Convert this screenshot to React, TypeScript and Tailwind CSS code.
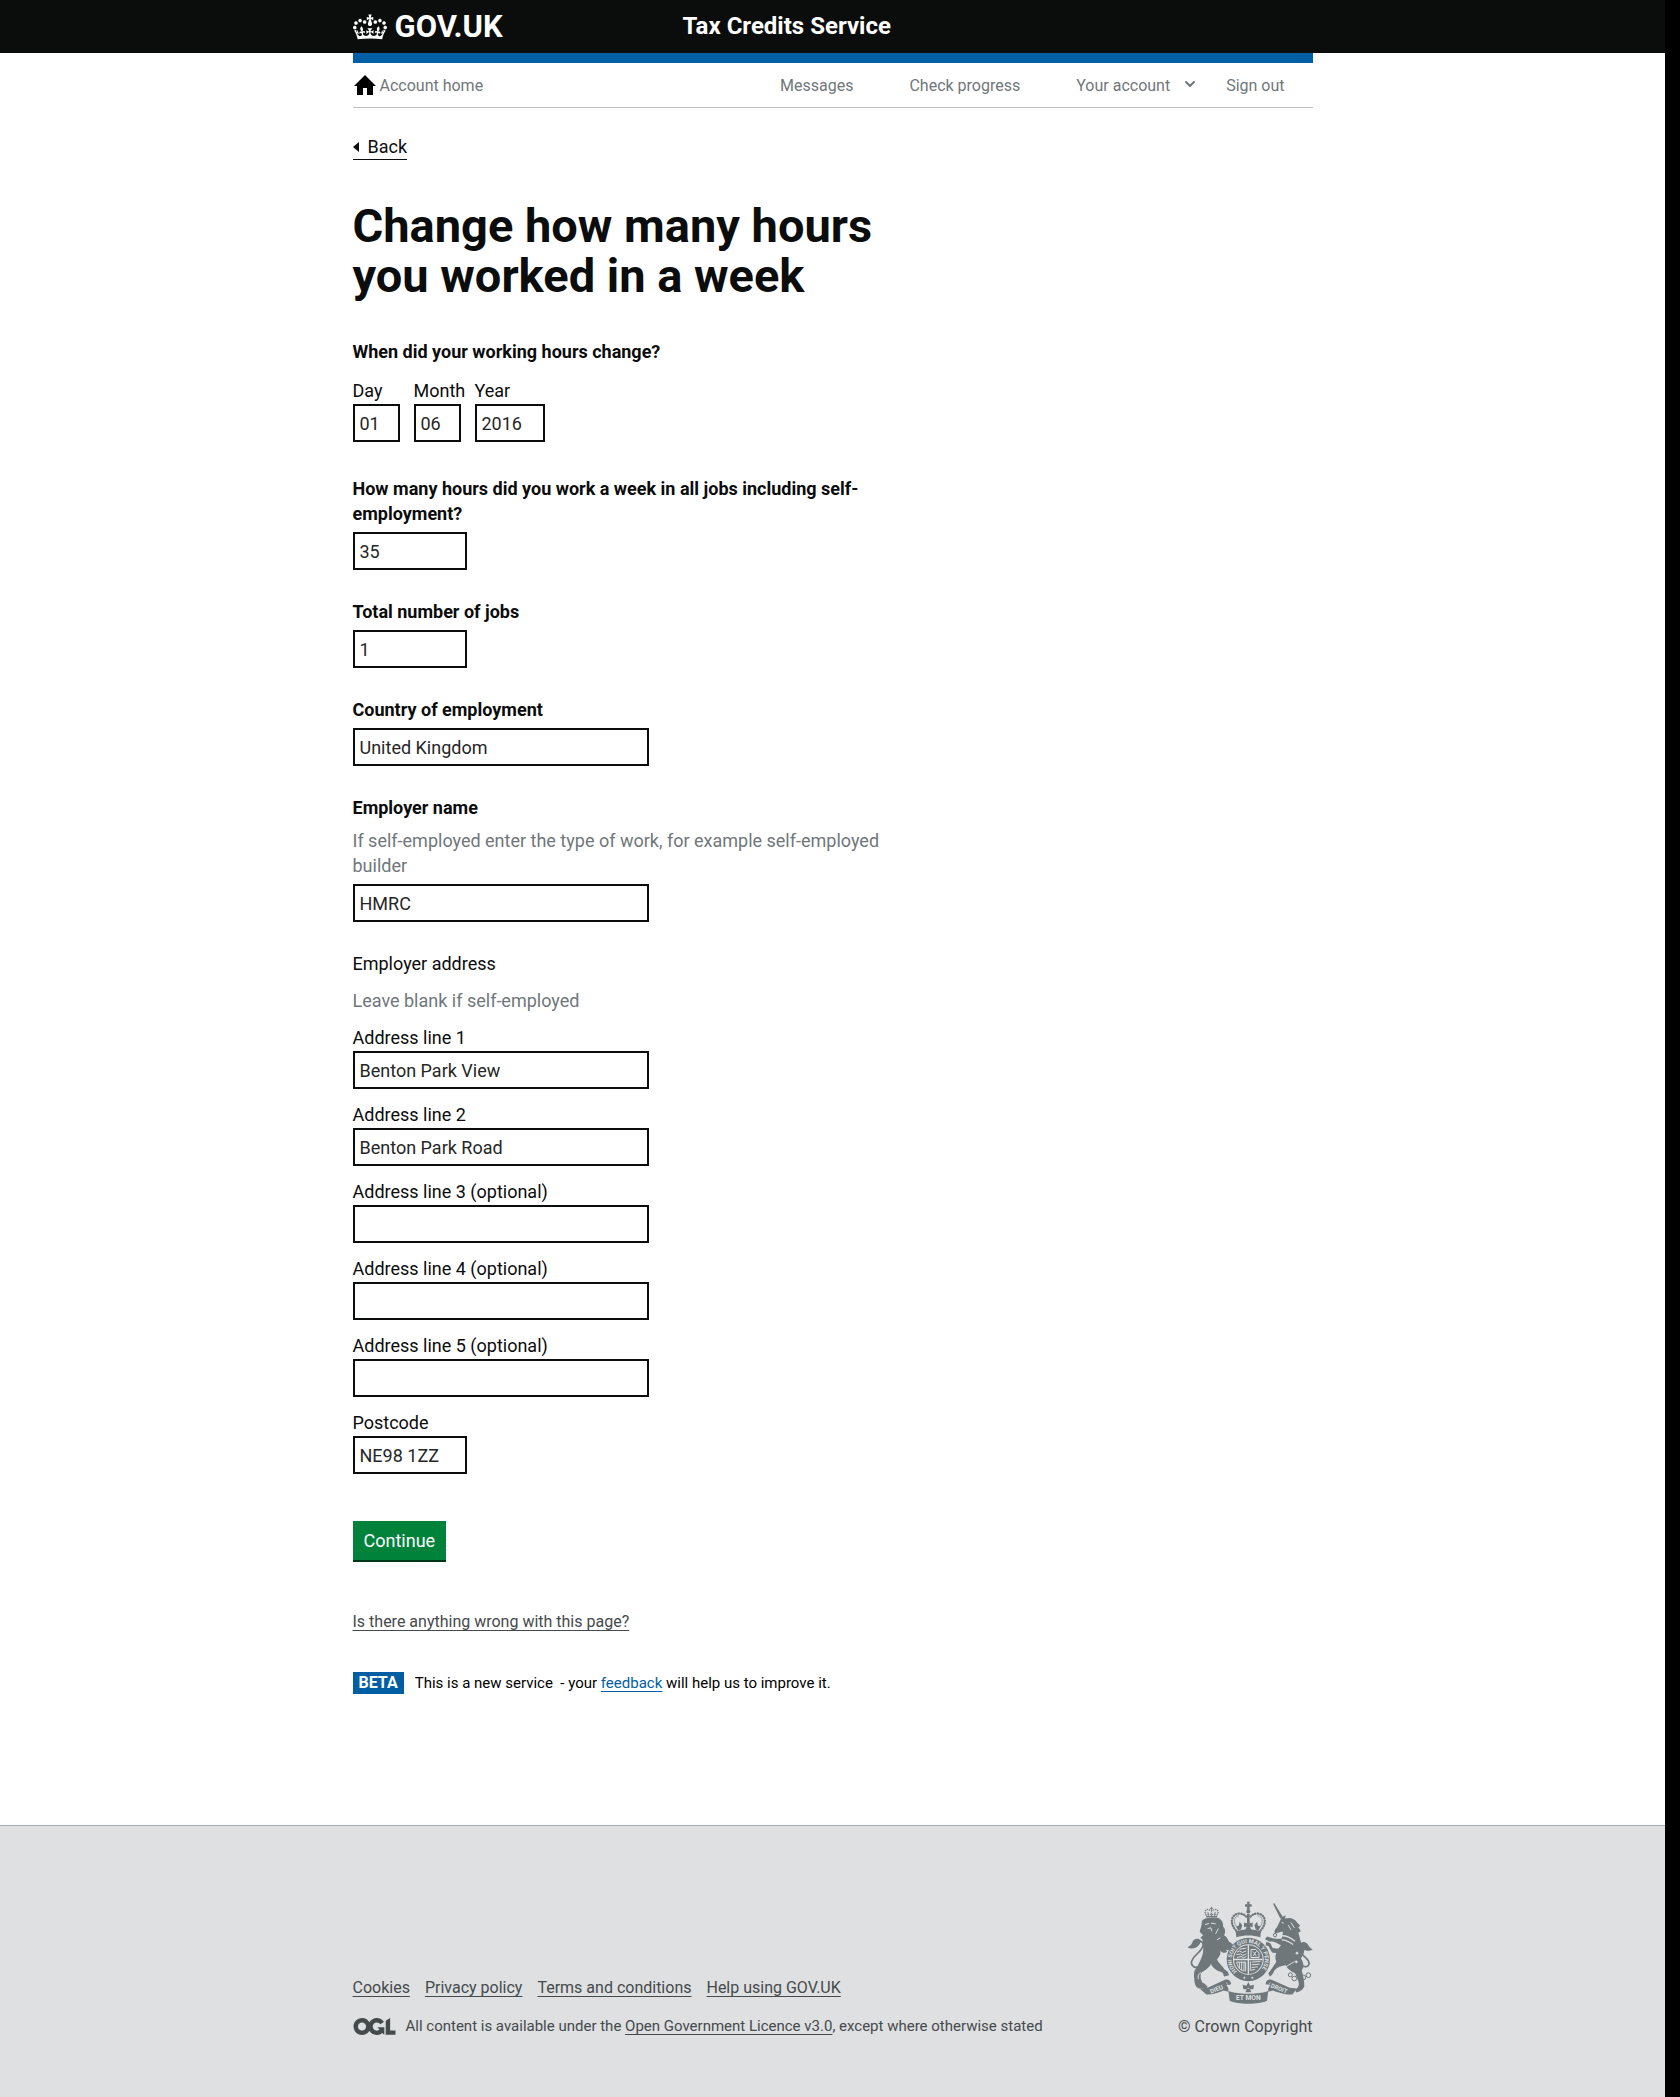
import type { ReactNode } from "react";
import { ChevronDown } from "lucide-react";

const CROWN =
  "M25 30.2c3.5 1.5 7.7-.2 9.1-3.7 1.5-3.6-.2-7.8-3.9-9.2-3.6-1.4-7.6.3-9.1 3.9-1.4 3.5.3 7.5 3.9 9zM9 39.5c3.6 1.5 7.8-.2 9.2-3.7 1.5-3.6-.2-7.8-3.9-9.1-3.6-1.5-7.6.2-9.1 3.8-1.4 3.5.3 7.5 3.8 9zM4.4 57.2c3.5 1.5 7.7-.2 9.1-3.8 1.5-3.6-.2-7.7-3.9-9.1-3.5-1.5-7.6.3-9.1 3.8-1.4 3.5.3 7.6 3.9 9.1zm38.3-21.4c3.5 1.5 7.7-.2 9.1-3.8 1.5-3.6-.2-7.7-3.9-9.1-3.6-1.5-7.6.3-9.1 3.8-1.3 3.6.4 7.7 3.9 9.1zm64.4-5.6c-3.6 1.5-7.8-.2-9.1-3.7-1.5-3.6.2-7.8 3.8-9.2 3.6-1.4 7.7.3 9.2 3.9 1.3 3.5-.4 7.5-3.9 9zm15.9 9.3c-3.6 1.5-7.7-.2-9.1-3.7-1.5-3.6.2-7.8 3.7-9.1 3.6-1.5 7.7.2 9.2 3.8 1.5 3.5-.3 7.5-3.8 9zm4.7 17.7c-3.6 1.5-7.8-.2-9.2-3.8-1.5-3.6.2-7.7 3.9-9.1 3.6-1.5 7.7.3 9.2 3.8 1.3 3.5-.4 7.6-3.9 9.1zM89.3 35.8c-3.6 1.5-7.8-.2-9.2-3.8-1.4-3.6.2-7.7 3.9-9.1 3.6-1.5 7.7.3 9.2 3.8 1.4 3.6-.3 7.7-3.9 9.1zM69.7 17.7l8.9 4.7V9.3l-8.9 2.8c-.2-.3-.5-.6-.9-.9L72.4 0H59.6l3.5 11.2c-.3.3-.6.5-.9.9l-8.8-2.8v13.1l8.8-4.7c.3.3.6.7.9.9l-5 15.4v.1c-.2.8-.4 1.6-.4 2.4 0 4.1 3.1 7.5 7 8.1h.2c.3 0 .7.1 1 .1.4 0 .7 0 1-.1h.2c4-.6 7.1-4.1 7.1-8.1 0-.8-.1-1.7-.4-2.4V34l-5.1-15.4c.4-.2.7-.6 1-.9zM66 92.8c16.9 0 32.8 1.1 47.1 3.2 4-16.9 8.9-26.7 14-33.5l-9.6-3.4c1 4.9 1.1 7.2 0 10.2-1.5-1.4-3-4.3-4.2-8.7L108.6 76c2.8-2 5-3.2 7.5-3.3-4.4 9.4-10 11.9-13.6 11.2-4.3-.8-6.3-4.6-5.6-7.9 1-4.7 5.7-5.9 8-.5 4.3-8.7-3-11.4-7.6-8.8 7.1-7.2 7.9-13.5 2.1-21.1-8 6.1-8.1 12.3-4.5 20.8-4.7-5.4-12.1-2.5-9.5 6.2 3.4-5.2 7.9-2 7.2 3.1-.6 4.3-6.4 7.8-13.5 7.2-10.3-.9-10.9-8-11.2-13.8 2.5-.5 7.1 1.8 11 7.3L80.2 60c-4.1 4.4-8 5.3-12.3 5.4 1.4-4.4 8-11.6 8-11.6H55.5s6.4 7.2 7.9 11.6c-4.2-.1-8-1-12.3-5.4l1.4 16.4c3.9-5.5 8.5-7.7 10.9-7.3-.3 5.8-.9 12.8-11.1 13.8-7.2.6-12.9-2.9-13.5-7.2-.7-5 3.8-8.3 7.1-3.1 2.7-8.7-4.6-11.6-9.4-6.2 3.7-8.5 3.6-14.7-4.6-20.8-5.8 7.6-5 13.9 2.2 21.1-4.7-2.6-11.9.1-7.7 8.8 2.3-5.5 7.1-4.2 8.1.5.7 3.3-1.3 7.1-5.7 7.9-3.5.7-9-1.8-13.5-11.2 2.5.1 4.7 1.3 7.5 3.3l-4.7-15.4c-1.2 4.4-2.7 7.2-4.3 8.7-1.1-3-.9-5.3 0-10.2l-9.5 3.4c5 6.9 9.9 16.7 14 33.5 14.8-2.1 30.8-3.2 47.7-3.2z";

const OGL =
  "M421.5 142.8V.1l-50.7 32.3v161.1h112.4v-50.7zm-122.3-9.6A47.12 47.12 0 0 1 221 97.8c0-26 21.1-47.1 47.1-47.1 16.7 0 31.4 8.7 39.7 21.8l42.7-27.2A97.63 97.63 0 0 0 268.1 0c-36.5 0-68.3 20.1-85.1 49.7A98 98 0 0 0 97.8 0C43.9 0 0 43.9 0 97.8s43.9 97.8 97.8 97.8c36.5 0 68.3-20.1 85.1-49.7a97.76 97.76 0 0 0 149.6 25.4l19.4 22.2h3v-87.8h-80l24.3 27.5zM97.8 145c-26 0-47.1-21.1-47.1-47.1s21.1-47.1 47.1-47.1 47.1 21.1 47.1 47.1S123.8 145 97.8 145";

function Container({ children, className = "" }: { children: ReactNode; className?: string }) {
  return <div className={`mx-auto w-full max-w-[960px] ${className}`}>{children}</div>;
}

function Crest() {
  const ink = "#6f777b";
  const paper = "#dee0e2";
  const lettering = { fontFamily: "Roboto, sans-serif", fontWeight: 700 };
  return (
    <svg className="h-[103px] w-[126px]" viewBox="22 18 378 308" role="img" aria-label="Royal coat of arms">
      {/* lion's crown */}
      <g transform="translate(74 35) scale(.33)" fill={ink}>
        <path d={CROWN} />
      </g>
      {/* lion */}
      <path
        fill={ink}
        d="M72 72C82 66 102 64 114 68C126 72 132 84 130 94C138 102 138 112 133 120C144 126 148 138 150 148C144 154 138 162 142 170C136 176 126 172 122 166C124 178 118 186 112 192C116 204 128 210 134 222C142 226 148 232 148 240L134 244C130 240 132 236 128 232C112 228 98 218 94 206C88 220 74 226 64 234C60 246 66 256 68 262C76 266 84 272 84 278L58 280C46 276 44 262 44 250C42 236 42 226 52 216C60 200 68 186 70 172C72 156 70 142 68 132L62 128L70 120L60 110C62 100 66 92 66 84C66 78 68 74 72 72Z"
      />
      <path fill={ink} d="M132 138C144 136 156 142 162 152L158 168C148 164 140 166 134 160Z" />
      <path stroke={paper} strokeWidth="3" fill="none" d="M76 88L88 85M94 84L108 86M84 100L94 98L96 108M116 100L108 116M122 128L112 134M64 232C56 236 54 244 56 252" />
      {/* lion's tail */}
      <path fill="none" stroke={ink} strokeWidth="5" d="M60 212C44 224 30 208 38 194C46 176 74 164 70 146C68 138 60 136 52 142" />
      <path fill={ink} d="M64 136C54 126 40 132 38 142C36 150 28 154 24 156C34 164 48 160 56 152C60 148 62 142 64 136Z" />
      {/* royal crown */}
      <g fill={ink}>
        <path d="M202 20H210L209 27H216V35H209L211 44H201L203 35H196V27H203Z" />
        <circle cx="206" cy="49" r="6" />
        <path d="M168 108C190 101 222 101 244 108L242 126C220 119 192 119 170 126Z" />
        <path d="M202 56H210V82H202Z" />
        <path d="M206 76L211 84L219 82V96L211 94L215 105H197L201 94L193 96V82L201 84Z" />
        <path d="M180 80L188 90L184 103L175 106L170 93L177 92ZM232 80L224 90L228 103L237 106L242 93L235 92Z" />
      </g>
      <path fill="none" stroke={ink} strokeWidth="7" strokeLinecap="round" strokeDasharray="1 7" d="M169 106C146 80 158 55 180 55C192 56 199 62 203 70M243 106C266 80 254 55 232 55C220 56 213 62 209 70" />
      <path fill="none" stroke={ink} strokeWidth="2" d="M174 100C158 80 163 63 178 62M238 100C254 80 249 63 234 62" />
      {/* garter and shield */}
      <circle cx="206" cy="193" r="65" fill={ink} />
      <circle cx="206" cy="193" r="46" fill={paper} />
      <circle cx="206" cy="193" r="43" fill={ink} />
      <g transform="translate(0 7)">
        <path stroke={paper} strokeWidth="4" d="M206 143V229M163 186H249" />
        <g stroke={paper} strokeWidth="3" fill="none">
          <path d="M172 164L180 160L188 165L200 160M170 172L182 169L190 174L200 169M172 180L184 177L192 181L200 177M180 155L200 152" />
          <path d="M212 192V220M216 194L242 192M216 202L240 200M216 210L234 208M214 218L226 216" />
          <path d="M214 156H228L238 166V180H214ZM220 162L230 176M230 162L220 176" />
          <path d="M171 194C175 214 186 222 198 220V194ZM179 194V212M186 194V218M193 194V218" />
        </g>
      </g>
      <path id="crest-garter" fill="none" d="M172 229A49.500 49.500 0 1 1 240 229" />
      <text fill={paper} fontSize="17" {...lettering}>
        <textPath href="#crest-garter">HONI SOIT QUI MAL Y PENSE</textPath>
      </text>
      <circle cx="194" cy="248" r="3" fill={paper} />
      <circle cx="218" cy="248" r="3" fill={paper} />
      {/* unicorn */}
      <path fill={ink} d="M280 26L284 24L310 66L302 70Z" />
      <path
        fill={ink}
        d="M306 66L318 60L316 70C330 66 346 70 352 82L362 92L356 96L364 108L356 112L360 126C362 140 368 150 374 158C376 172 368 182 364 190C372 202 374 216 366 226C372 244 374 262 374 274C370 284 360 290 350 292L346 284C356 278 360 270 356 258L346 234C334 228 322 220 318 210C302 212 292 216 284 226C280 236 276 242 270 244L266 234C276 222 284 208 290 200C286 190 286 180 290 174C278 172 270 164 268 154L258 150L260 140L272 144L280 160L296 160L304 150C292 144 280 136 270 140L256 132L262 124L282 130C290 130 298 132 306 130L310 110C300 108 294 116 286 114C282 108 286 102 292 96Z"
      />
      <path stroke={paper} strokeWidth="4" fill="none" d="M302 122C320 120 334 128 346 138M306 134C320 134 330 140 340 148" />
      <path stroke={paper} strokeWidth="3" fill="none" d="M306 82L312 84M334 82L344 98M326 90L334 104M318 216C330 206 340 204 348 196" />
      {/* unicorn's tail */}
      <path fill="none" stroke={ink} strokeWidth="5" d="M364 210C384 222 394 208 384 194C372 180 350 168 354 152C356 144 366 144 374 150" />
      <path fill={ink} d="M362 146C370 136 382 142 386 150C390 156 394 160 399 162C390 170 376 168 370 160C366 156 364 152 362 146Z" />
      {/* chain */}
      <g fill="none" stroke={ink} strokeWidth="3">
        <circle cx="286" cy="120" r="5" />
        <circle cx="282" cy="166" r="6" />
        <circle cx="332" cy="239" r="6" />
        <circle cx="344" cy="250" r="7" />
        <circle cx="371" cy="247" r="7" />
        <circle cx="386" cy="240" r="7" />
      </g>
      <circle cx="352" cy="174" r="5" fill={paper} stroke={ink} strokeWidth="2" />
      <circle cx="350" cy="200" r="5" fill={paper} stroke={ink} strokeWidth="2" />
      {/* ribbon */}
      <g fill={ink}>
        <path d="M60 280L84 278L136 254C144 250 154 256 154 266C152 270 146 270 140 270C146 276 148 284 146 290L132 286C116 292 96 300 80 298Z" />
        <path d="M352 280L330 278L276 254C268 250 258 256 258 266C260 270 266 270 272 270C266 276 264 284 266 290L280 286C296 292 320 300 338 298Z" />
        <path d="M146 286C166 298 246 298 266 286L262 317C240 329 172 329 150 317Z" />
        <path d="M206 261L212 272L223 269L221 282L211 282L215 291H197L201 282L191 282L189 269L200 272Z" />
      </g>
      <path fill="none" stroke={paper} strokeWidth="2" d="M146 286C166 297 246 297 266 286M140 262L148 274M272 262L264 274M203 280H209" />
      <text x="94" y="296" fontSize="19" fill={paper} transform="rotate(-22 94 296)" {...lettering}>
        DIEU
      </text>
      <text x="272" y="276" fontSize="18" fill={paper} transform="rotate(22 272 276)" {...lettering}>
        DROIT
      </text>
      <text x="206" y="316" fontSize="20" fill={paper} textAnchor="middle" {...lettering}>
        ET MON
      </text>
    </svg>
  );
}

function Field({
  id,
  label,
  value = "",
  width,
  bold = false,
  hint,
}: {
  id: string;
  label: string;
  value?: string;
  width: string;
  bold?: boolean;
  hint?: string;
}) {
  return (
    <div>
      <label htmlFor={id} className={bold ? "mb-1.5 block font-bold" : "mb-px block whitespace-nowrap"}>
        {label}
      </label>
      {hint && (
        <p id={`${id}-hint`} className="mt-2 mb-1.5 text-[#6f777b]">
          {hint}
        </p>
      )}
      <input
        id={id}
        type="text"
        defaultValue={value}
        aria-describedby={hint ? `${id}-hint` : undefined}
        className={`block h-[38px] rounded-none border-2 border-[#0b0c0c] bg-white px-[5px] text-[#262626] ${width}`}
      />
    </div>
  );
}

const footerLinks = ["Cookies", "Privacy policy", "Terms and conditions", "Help using GOV.UK"];
const link = "underline underline-offset-3";

export default function App() {
  return (
    <div className="flex min-h-screen bg-white font-['Roboto',sans-serif] text-[18px] leading-[25px] text-[#0b0c0c]">
      <div className="flex min-w-0 flex-1 flex-col">
        <header className="bg-[#0b0c0c] text-white">
          <Container className="flex h-[53px] items-center">
            <div className="w-[330px]">
              <a href="#" className="flex items-center gap-2 text-[31px] leading-[36px] font-bold">
                <svg className="h-[26px] w-[34px]" viewBox="0 0 132 97" fill="currentColor" aria-hidden="true">
                  <path d={CROWN} />
                </svg>
                GOV.UK
              </a>
            </div>
            <a href="#" className="text-[24px] font-bold">
              Tax Credits Service
            </a>
          </Container>
        </header>

        <Container>
          <nav className="flex h-[55px] items-center justify-between border-t-10 border-b border-t-[#005ea5] border-b-[#bfc1c3] text-[16px] text-[#6f777b]">
            <a href="#" className="flex items-center gap-1">
              <svg className="ml-px h-5 w-[22px]" viewBox="0 0 22 20" fill="#000" aria-hidden="true">
                <path d="M11 0L22 11H19V20H13V13H9V20H3V11H0Z" />
              </svg>
              Account home
            </a>
            <ul className="flex gap-14 pr-7">
              <li>
                <a href="#">Messages</a>
              </li>
              <li>
                <a href="#">Check progress</a>
              </li>
              <li className="flex gap-3">
                <a href="#">Your account</a>
                <ChevronDown className="mt-[3px] -mr-7 size-4" strokeWidth={3} aria-hidden="true" />
              </li>
              <li>
                <a href="#">Sign out</a>
              </li>
            </ul>
          </nav>

          <main className="pb-[131px]">
            <a href="#" className="mt-[26px] inline-flex items-center border-b border-[#0b0c0c]">
              <svg className="mr-[9px] h-[10px] w-[6px]" viewBox="0 0 6 10" fill="currentColor" aria-hidden="true">
                <path d="M6 0V10L0 5Z" />
              </svg>
              Back
            </a>

            <form className="max-w-[570px]" onSubmit={(e) => e.preventDefault()}>
              <h1 className="mt-[41px] text-[47px] leading-[50px] font-bold">Change how many hours you worked in a week</h1>

              <fieldset className="mt-[38px]">
                <legend className="mb-[14px] font-bold">When did your working hours change?</legend>
                <div className="flex gap-[14px]">
                  <div className="w-[47px]">
                    <Field id="day" label="Day" value="01" width="w-[47px]" />
                  </div>
                  <div className="w-[47px]">
                    <Field id="month" label="Month" value="06" width="w-[47px]" />
                  </div>
                  <Field id="year" label="Year" value="2016" width="w-[70px]" />
                </div>
              </fieldset>

              <div className="mt-[34px] flex flex-col gap-[29px]">
                <Field
                  id="hours"
                  label="How many hours did you work a week in all jobs including self-employment?"
                  value="35"
                  width="w-[114px]"
                  bold
                />
                <Field id="jobs" label="Total number of jobs" value="1" width="w-[114px]" bold />
                <Field id="country" label="Country of employment" value="United Kingdom" width="w-[296px]" bold />
                <Field
                  id="employer"
                  label="Employer name"
                  value="HMRC"
                  width="w-[296px]"
                  hint="If self-employed enter the type of work, for example self-employed builder"
                  bold
                />
                <fieldset>
                  <legend className="mb-3">Employer address</legend>
                  <p className="mb-3 text-[#6f777b]">Leave blank if self-employed</p>
                  <div className="flex flex-col gap-[13px]">
                    <Field id="line1" label="Address line 1" value="Benton Park View" width="w-[296px]" />
                    <Field id="line2" label="Address line 2" value="Benton Park Road" width="w-[296px]" />
                    <Field id="line3" label="Address line 3 (optional)" width="w-[296px]" />
                    <Field id="line4" label="Address line 4 (optional)" width="w-[296px]" />
                    <Field id="line5" label="Address line 5 (optional)" width="w-[296px]" />
                    <Field id="postcode" label="Postcode" value="NE98 1ZZ" width="w-[114px]" />
                  </div>
                </fieldset>
              </div>

              <button
                type="submit"
                className="mt-[47px] block h-[39px] bg-[#00823b] px-[11px] text-white shadow-[0_2px_0_#003618]"
              >
                Continue
              </button>
            </form>

            <a href="#" className={`mt-[49px] inline-block text-[16px] text-[#454a4c] ${link}`}>
              Is there anything wrong with this page?
            </a>

            <div className="mt-[38px] flex items-center text-[15px] leading-[22px] text-black">
              <strong className="mr-[11px] bg-[#005ea5] px-1.5 text-[16px] text-white">BETA</strong>
              <p>
                This is a new service &nbsp;- your{" "}
                <a href="#" className={`text-[#005ea5] ${link}`}>
                  feedback
                </a>{" "}
                will help us to improve it.
              </p>
            </div>
          </main>
        </Container>

        <footer className="flex-1 border-t border-[#a1acb2] bg-[#dee0e2] pt-[75px] pb-14 text-[15px] text-[#454a4c]">
          <Container className="flex items-end justify-between">
            <div>
              <ul className="mb-[14px] flex gap-[15px] text-[16px]">
                {footerLinks.map((text) => (
                  <li key={text}>
                    <a href="#" className={link}>
                      {text}
                    </a>
                  </li>
                ))}
              </ul>
              <div className="flex items-center gap-[10px]">
                <svg className="h-[17px] w-[43px]" viewBox="0 0 483.2 195.7" fill="#454a4c" role="img" aria-label="Open Government Licence">
                  <path d={OGL} />
                </svg>
                <p>
                  All content is available under the{" "}
                  <a href="#" className={link}>
                    Open Government Licence v3.0
                  </a>
                  , except where otherwise stated
                </p>
              </div>
            </div>
            <a href="#" className="flex flex-col items-end gap-[10px] text-[16px]">
              <Crest />
              <span>© Crown Copyright</span>
            </a>
          </Container>
        </footer>
      </div>
      <div className="w-[15px] shrink-0 bg-black" />
    </div>
  );
}
